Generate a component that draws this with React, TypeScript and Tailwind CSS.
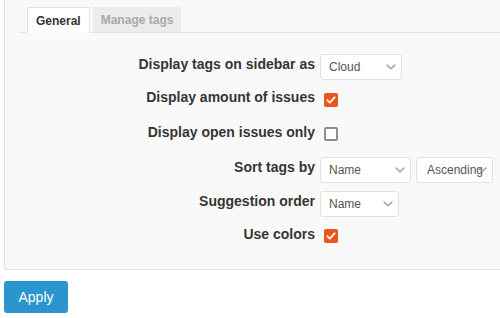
import React from "react";

function Chevron() {
  return (
    <svg width="10" height="6" viewBox="0 0 10 6" fill="none" className="shrink-0">
      <path d="M1 1l4 3.8L9 1" stroke="#9a9a9a" strokeWidth="1.3" strokeLinecap="round" strokeLinejoin="round" />
    </svg>
  );
}

function Select({ value, width, overlap }: { value: string; width: string; overlap?: boolean }) {
  return (
    <div
      className={`flex h-[26px] items-center justify-between rounded-[3px] border border-[#e2e2e2] bg-white pr-[5px] text-[12px] text-[#555] ${overlap ? "pl-[10px]" : "pl-[8px]"} ${width}`}
    >
      <span className={overlap ? "-mr-[9px]" : ""}>{value}</span>
      <Chevron />
    </div>
  );
}

function Checkbox({ checked }: { checked?: boolean }) {
  return checked ? (
    <div className="ml-[4px] flex h-[14px] w-[14px] items-center justify-center rounded-[2px] bg-[#ef541d]">
      <svg width="10" height="8" viewBox="0 0 10 8" fill="none">
        <path d="M1.3 4.2l2.5 2.4L8.7 1.4" stroke="#fff" strokeWidth="1.8" strokeLinecap="round" strokeLinejoin="round" />
      </svg>
    </div>
  ) : (
    <div className="ml-[4px] h-[14px] w-[14px] rounded-[2px] border-2 border-[#8d8d99] bg-white" />
  );
}

function Row({ label, h, children }: { label: string; h: string; children: React.ReactNode }) {
  return (
    <div className={`flex items-center ${h}`}>
      <div className="w-[310px] pb-[4px] text-right text-[14px] font-bold text-[#353535]">{label}</div>
      <div className="ml-[5px] flex items-center gap-[5px]">{children}</div>
    </div>
  );
}

export default function App() {
  return (
    <div className="min-h-[318px] bg-white pl-[4px] font-['Liberation_Sans',Arial,sans-serif]">
      <div className="h-[270px] rounded-bl-[3px] border-b border-l border-[#e4e4e4] bg-[#f9f9f9]">
        <div className="ml-[15px] flex gap-[3px] border-b border-[#e4e4e4] pl-[7px] pt-[7px]">
          <div className="-mb-px flex h-[26px] items-center border border-b-0 border-[#e4e4e4] bg-white px-[8px] text-[12px] font-bold text-[#333]">
            General
          </div>
          <div className="flex h-[25px] items-center bg-[#ececec] px-[8px] text-[12px] font-bold text-[#a8a8a8]">
            Manage tags
          </div>
        </div>
        <div className="pt-[17px]">
          <Row label="Display tags on sidebar as" h="h-[33px]">
            <Select value="Cloud" width="w-[82px]" />
          </Row>
          <Row label="Display amount of issues" h="h-[33px]">
            <Checkbox checked />
          </Row>
          <Row label="Display open issues only" h="h-[36px]">
            <Checkbox />
          </Row>
          <Row label="Sort tags by" h="h-[35px]">
            <Select value="Name" width="w-[91px]" />
            <Select value="Ascending" width="w-[77px]" overlap />
          </Row>
          <Row label="Suggestion order" h="h-[33px]">
            <Select value="Name" width="w-[79px]" />
          </Row>
          <Row label="Use colors" h="h-[32px]">
            <Checkbox checked />
          </Row>
        </div>
      </div>
      <button className="mt-[11px] h-[32px] w-[64px] rounded-[3px] bg-[#2b95cf] text-[14px] text-white">
        Apply
      </button>
    </div>
  );
}
